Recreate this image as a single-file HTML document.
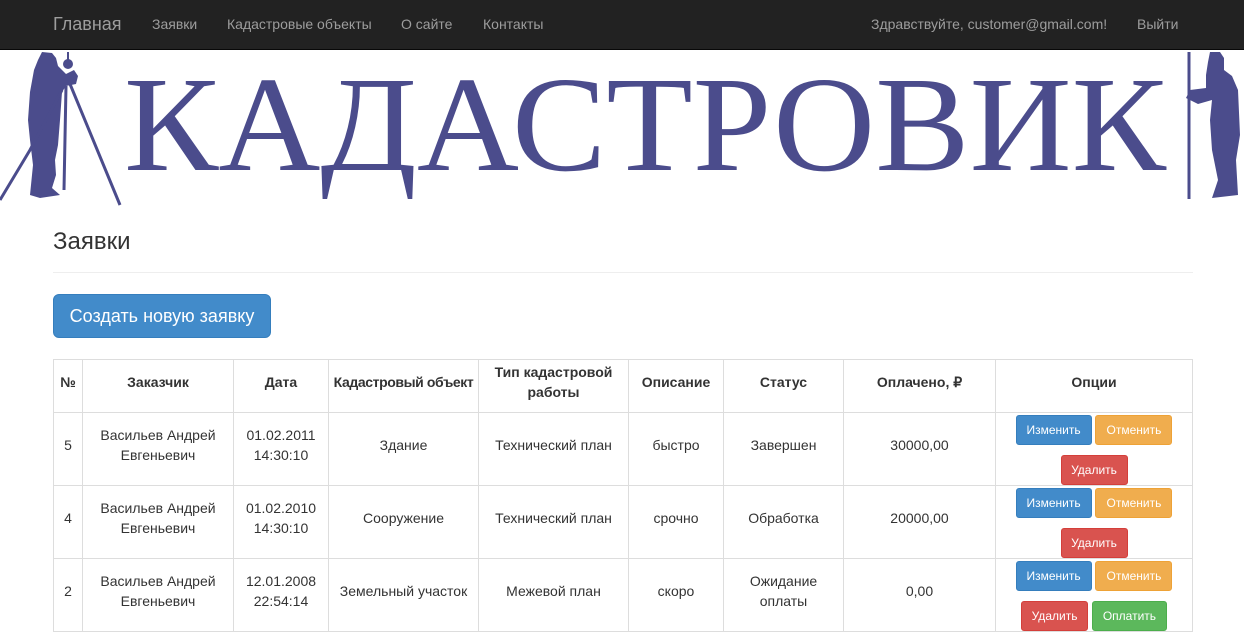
<!DOCTYPE html>
<html><head><meta charset="utf-8"><style>
*{box-sizing:border-box;margin:0;padding:0}
body{width:1244px;height:639px;overflow:hidden;background:#fff;font-family:"Liberation Sans",sans-serif;font-size:14px;color:#333;position:relative}
.nav{position:absolute;left:0;top:0;width:1244px;height:50px;background:#222;border-bottom:1px solid #080808;color:#9d9d9d}
.nav span{position:absolute;top:16px;font-size:14px;white-space:nowrap}
.brand{font-size:18px!important;top:14px!important}
h2{position:absolute;left:53px;top:228px;font-size:24px;font-weight:400;color:#333}
.hr{position:absolute;left:53px;top:272px;width:1140px;border-top:1px solid #eee}
.big{position:absolute;left:53px;top:294px;width:218px;height:44px;background:#428bca;border:1px solid #357ebd;border-radius:6px;color:#fff;font-size:18px;text-align:center;line-height:42px}
table{position:absolute;left:53px;top:359px;border-collapse:collapse;width:1140px;table-layout:fixed}
td,th{border:1px solid #ddd;text-align:center;vertical-align:middle;line-height:20px;padding:0 2px}
th{height:53px;font-weight:bold;padding-bottom:8px}
td{height:73px;padding-top:0;padding-bottom:8px}
.b{display:inline-block;height:30px;line-height:28px;border-radius:3px;color:#fff;font-size:12px;border:1px solid;padding:0;margin:0;vertical-align:top}
.p{background:#428bca;border-color:#357ebd;width:76px}
.w{background:#f0ad4e;border-color:#eea236;width:77px}
.d{background:#d9534f;border-color:#d43f3a;width:67px}
.s{background:#5cb85c;border-color:#4cae4c;width:75px}
td.opt{line-height:0;padding:2px 0 0;vertical-align:top;height:73px}
.opt div{height:40px;line-height:0;overflow:visible}
.opt div+div{height:30px}
</style></head><body>
<div class="nav">
<span class="brand" style="left:53px">Главная</span>
<span style="left:152px">Заявки</span>
<span style="left:227px">Кадастровые объекты</span>
<span style="left:401px">О сайте</span>
<span style="left:483px">Контакты</span>
<span style="left:871px">Здравствуйте, customer@gmail.com!</span>
<span style="left:1137px">Выйти</span>
</div>
<svg style="position:absolute;left:0;top:50px" width="1244" height="160" viewBox="0 50 1244 160">
<g fill="#4b4c8c" stroke="#4b4c8c">
<text x="124" y="170" font-family="Liberation Serif" font-size="136" textLength="1042" lengthAdjust="spacingAndGlyphs" stroke="none">КАДАСТРОВИК</text>
<path stroke="none" d="M42 52 L52 53 L56 58 L58 66 L66 74 L74 70 L78 76 L76 84 L66 86 L62 92 L60 120 L58 145 L55 160 L56 175 L52 188 L60 195 L40 198 L30 195 L33 165 L30 140 L28 120 L30 92 L34 70 L38 60 Z"/>
<circle cx="68" cy="64" r="5" stroke="none"/>
<path fill="none" stroke-width="3" d="M66 86 L64 190 M70 84 L120 205 M62 90 L30 150 M30 150 L0 200"/>
<path fill="none" stroke-width="2" d="M68 52 L68 60"/>
<path fill="none" stroke-width="3" d="M1189 52 L1189 199"/>
<path stroke="none" d="M1210 52 L1220 52 L1224 58 L1224 70 L1232 76 L1238 90 L1240 135 L1236 160 L1238 195 L1212 198 L1218 180 L1212 150 L1210 120 L1212 100 L1198 104 L1186 98 L1190 90 L1206 88 L1206 75 L1208 62 Z"/>
</g>
</svg>
<h2>Заявки</h2>
<div class="hr"></div>
<div class="big">Создать новую заявку</div>
<table>
<colgroup><col style="width:29px"><col style="width:151px"><col style="width:95px"><col style="width:150px"><col style="width:150px"><col style="width:95px"><col style="width:120px"><col style="width:152px"><col></colgroup>
<tr><th>№</th><th>Заказчик</th><th>Дата</th><th style="white-space:nowrap;letter-spacing:-0.4px;padding:0 0 8px">Кадастровый объект</th><th>Тип кадастровой работы</th><th>Описание</th><th>Статус</th><th>Оплачено, ₽</th><th>Опции</th></tr>
<tr><td>5</td><td>Васильев Андрей Евгеньевич</td><td>01.02.2011<br>14:30:10</td><td>Здание</td><td>Технический план</td><td>быстро</td><td>Завершен</td><td>30000,00</td><td class="opt"><div><span class="b p">Изменить</span> <span class="b w">Отменить</span></div><div><span class="b d">Удалить</span></div></td></tr>
<tr><td>4</td><td>Васильев Андрей Евгеньевич</td><td>01.02.2010<br>14:30:10</td><td>Сооружение</td><td>Технический план</td><td>срочно</td><td>Обработка</td><td>20000,00</td><td class="opt"><div><span class="b p">Изменить</span> <span class="b w">Отменить</span></div><div><span class="b d">Удалить</span></div></td></tr>
<tr><td>2</td><td>Васильев Андрей Евгеньевич</td><td>12.01.2008<br>22:54:14</td><td>Земельный участок</td><td>Межевой план</td><td>скоро</td><td>Ожидание оплаты</td><td>0,00</td><td class="opt"><div><span class="b p">Изменить</span> <span class="b w">Отменить</span></div><div><span class="b d">Удалить</span> <span class="b s">Оплатить</span></div></td></tr>
</table>
</body></html>
